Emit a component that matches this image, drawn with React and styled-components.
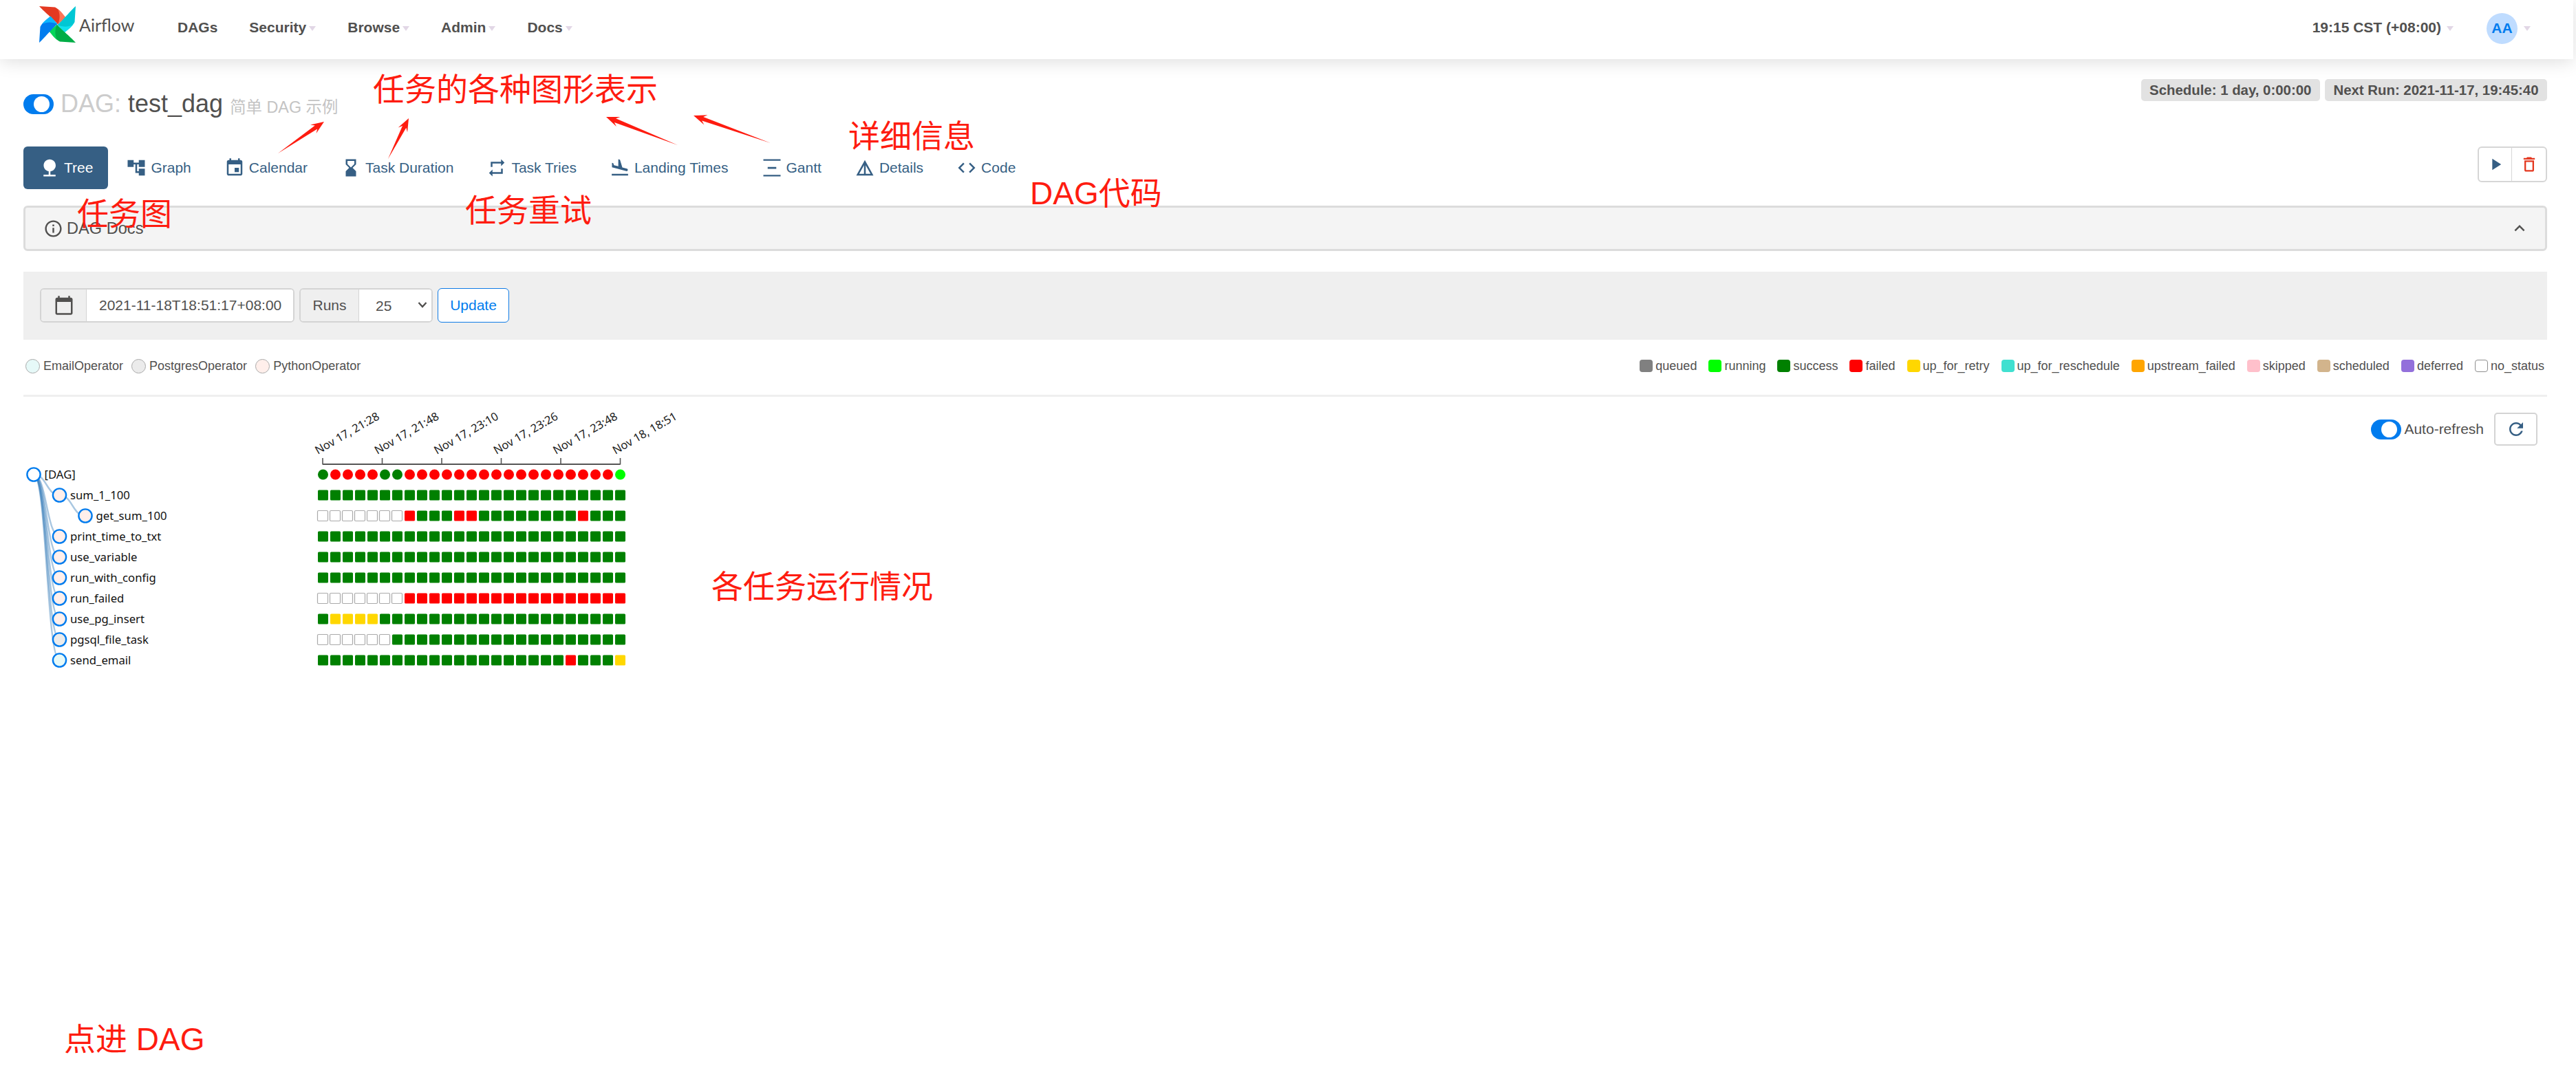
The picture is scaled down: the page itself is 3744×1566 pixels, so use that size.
import React from "react";
import styled, { createGlobalStyle } from "styled-components";

const Global = createGlobalStyle`
  html, body { margin: 0; padding: 0; background: #fff; }
  body { font-family: "Liberation Sans", Arial, sans-serif; color: #51504f; }
  * { box-sizing: border-box; }
`;

const Page = styled.div`
  position: relative;
  width: 3744px;
  height: 1566px;
  overflow: hidden;
  background: #fff;
`;

const Navbar = styled.header`
  width: 3740px;
  height: 86px;
  display: flex;
  align-items: center;
  padding: 0 62px 7px 57px;
  background: #fff;
  box-shadow: 0 4px 24px rgba(0, 0, 0, 0.13);
`;

const Brand = styled.div`
  display: flex;
  align-items: center;
  width: 201px;
  height: 53px;
  margin-top: -8px;
`;

const BrandName = styled.span`
  font-family: Lato, sans-serif;
  font-size: 25px;
  margin-left: 5px;
  margin-top: 1px;
  color: #51504f;
`;

const NavLinks = styled.nav`
  display: flex;
  align-items: center;
  gap: 46px;
  flex: 1;
`;

const NavItem = styled.span`
  display: inline-flex;
  align-items: center;
  font-size: 21px;
  font-weight: 700;
  color: #51504f;
  line-height: 24px;
`;

const Caret = styled.i`
  display: inline-block;
  width: 0;
  height: 0;
  margin-left: ${(p) => p.$gap || 4}px;
  margin-top: 4px;
  border-left: 5.5px solid transparent;
  border-right: 5.5px solid transparent;
  border-top: 7px solid #e2d7e6;
`;

const Avatar = styled.span`
  width: 45px;
  height: 45px;
  margin: 3px 0 0 48px;
  border-radius: 50%;
  background: #bfdcff;
  color: #017cee;
  font-size: 21px;
  font-weight: 700;
  display: flex;
  align-items: center;
  justify-content: center;
`;

const Main = styled.main`
  width: 3702px;
  margin-left: 34px;
  padding-right: 34px;
`;

const TitleRow = styled.div`
  display: flex;
  justify-content: space-between;
  align-items: flex-start;
  height: 98px;
  margin-top: 29px;
`;

const Title = styled.div`
  display: flex;
  align-items: center;
  margin-top: 11px;
  height: 50px;
`;

const Toggle = styled.span`
  position: relative;
  display: inline-block;
  flex: none;
  width: 44px;
  height: 29px;
  border-radius: 15px;
  background: #017cee;
  &::after {
    content: "";
    position: absolute;
    top: 3px;
    right: 6px;
    width: 23px;
    height: 23px;
    border-radius: 50%;
    background: #fff;
  }
`;

const DagLabel = styled.span`
  font-size: 36px;
  color: #ccc;
  margin-left: 10px;
`;

const DagName = styled.span`
  font-size: 36px;
  color: #51504f;
  margin-left: 10px;
`;

const DagDesc = styled.small`
  font-family: "Liberation Sans", "Noto Sans CJK SC", sans-serif;
  font-size: 23.4px;
  color: #c4c4c4;
  margin-left: 10px;
  margin-top: 5px;
`;

const Badges = styled.div`
  display: flex;
  gap: 7px;
`;

const Badge = styled.span`
  height: 32px;
  padding: 0 12.5px;
  display: flex;
  align-items: center;
  background: #e2e2e2;
  border-radius: 5px;
  font-size: 20.4px;
  font-weight: 700;
  color: #51504f;
`;

const TabsRow = styled.div`
  display: flex;
  justify-content: space-between;
  align-items: flex-start;
  height: 62px;
`;

const Tabs = styled.div`
  display: flex;
  gap: 3px;
`;

const Tab = styled.a`
  height: 62px;
  padding: 0 22px 0 23px;
  display: flex;
  align-items: center;
  gap: 6px;
  font-size: 21px;
  border-radius: 6px;
  color: ${(p) => (p.$active ? "#fff" : "#365f84")};
  background: ${(p) => (p.$active ? "#365f84" : "transparent")};
`;

const Icon = styled.svg`
  width: ${(p) => p.$size || 30}px;
  height: ${(p) => p.$size || 30}px;
  flex: none;
  fill: ${(p) => p.$color || "currentColor"};
`;

const ActionGroup = styled.div`
  display: flex;
  height: 52px;
  border: 2px solid #d6d6d6;
  border-radius: 6px;
`;

const ActionButton = styled.span`
  width: ${(p) => p.$w}px;
  display: flex;
  align-items: center;
  justify-content: center;
  border-left: ${(p) => (p.$divided ? "1.5px solid #d6d6d6" : "none")};
`;

const DocsPanel = styled.section`
  height: 66px;
  margin-top: 24px;
  padding: 0 22px 0 26px;
  display: flex;
  align-items: center;
  justify-content: space-between;
  background: #f4f4f4;
  border: 3px solid #dcdcdc;
  border-radius: 6px;
`;

const DocsTitle = styled.span`
  display: flex;
  align-items: center;
  gap: 5px;
  font-size: 23.6px;
  color: #51504f;
`;

const Toolbar = styled.div`
  margin-top: 30px;
  height: 99px;
  padding: 24px;
  display: flex;
  gap: 7px;
  background: #efefef;
`;

const InputGroup = styled.div`
  height: 50px;
  display: flex;
  background: #fff;
  border: 2px solid #d4d4d4;
  border-radius: 6px;
  overflow: hidden;
`;

const Addon = styled.span`
  width: ${(p) => p.$w}px;
  display: flex;
  align-items: center;
  justify-content: center;
  background: #efefef;
  border-right: 1.5px solid #d4d4d4;
  font-size: 21px;
  color: #51504f;
`;

const DateInput = styled.input`
  width: 300px;
  border: none;
  outline: none;
  padding: 0 0 0 18px;
  font-family: "Liberation Sans", Arial, sans-serif;
  font-size: 21px;
  color: #51504f;
  background: #fff;
`;

const SelectWrap = styled.span`
  position: relative;
  width: 105px;
  display: flex;
`;

const RunsSelect = styled.select`
  width: 100%;
  border: none;
  outline: none;
  appearance: none;
  padding: 0 0 0 24px;
  font-family: "Liberation Sans", Arial, sans-serif;
  font-size: 21px;
  color: #51504f;
  background: #fff;
`;

const SelectChevron = styled.svg`
  position: absolute;
  right: 6px;
  top: 17px;
  width: 14px;
  height: 10px;
  fill: none;
  stroke: #51504f;
  stroke-width: 2.4;
`;

const UpdateButton = styled.button`
  width: 104px;
  height: 50px;
  padding: 0;
  background: #fff;
  border: 1.5px solid #0f7be6;
  border-radius: 6px;
  font-family: "Liberation Sans", Arial, sans-serif;
  font-size: 21px;
  color: #017cee;
`;

const LegendRow = styled.div`
  height: 83px;
  padding: 0 4px 0 3px;
  display: flex;
  align-items: center;
  justify-content: space-between;
  border-bottom: 3px solid #efefef;
`;

const LegendList = styled.div`
  display: flex;
  align-items: center;
  gap: ${(p) => p.$gap}px;
  margin-top: -4px;
`;

const LegendItem = styled.span`
  display: inline-flex;
  align-items: center;
  gap: ${(p) => p.$gap}px;
  font-size: 18px;
  color: #51504f;
`;

const OperatorDot = styled.i`
  width: 21px;
  height: 21px;
  border-radius: 50%;
  background: ${(p) => p.$fill};
  border: 1.5px solid #a9a9a9;
`;

const StateBox = styled.i`
  width: 19px;
  height: 18px;
  border-radius: 4px;
  background: ${(p) => p.$fill};
  border: ${(p) => (p.$fill === "#fff" ? "1.5px solid #8f8f8f" : "none")};
`;

const TreeArea = styled.div`
  display: flex;
  justify-content: space-between;
  align-items: flex-start;
`;

const TreeSvg = styled.svg`
  display: block;
  width: 1040px;
  height: 410px;
  margin-left: -34px;
  overflow: visible;
  flex: none;
`;

const RefreshBar = styled.div`
  display: flex;
  align-items: center;
  margin-top: 23px;
  margin-right: 14px;
`;

const RefreshLabel = styled.span`
  font-size: 21px;
  color: #51504f;
  margin: 0 15px 0 4px;
`;

const RefreshButton = styled.span`
  width: 63px;
  height: 48px;
  display: flex;
  align-items: center;
  justify-content: center;
  border: 2px solid #d4d4d4;
  border-radius: 5px;
  color: #365f84;
`;

const NodeLabel = styled.text`
  font-family: "Noto Sans", sans-serif;
  font-size: 16.7px;
  fill: #111;
  dominant-baseline: central;
`;

const AxisLabel = styled.text`
  font-family: "Noto Sans", sans-serif;
  font-size: 16.5px;
  fill: #222;
`;

const Note = styled.span`
  position: absolute;
  left: ${(p) => p.$x}px;
  top: ${(p) => p.$y}px;
  font-family: "Liberation Sans", "Noto Sans CJK SC", sans-serif;
  font-size: 46px;
  line-height: 1;
  color: #fe1c10;
  white-space: nowrap;
`;

const ArrowLayer = styled.svg`
  position: absolute;
  left: 0;
  top: 0;
  width: 3744px;
  height: 400px;
  pointer-events: none;
  fill: #fe1c10;
`;

const paths = {
  nature: "M13 16.12c3.47-.41 6.17-3.36 6.17-6.95 0-3.87-3.13-7-7-7s-7 3.13-7 7c0 3.47 2.52 6.34 5.83 6.89V20H5v2h14v-2h-6v-3.88z",
  graph: "M22 11V3h-7v3H9V3H2v8h7V8h2v10h4v3h7v-8h-7v3h-2V8h2v3z",
  event: "M17 12h-5v5h5v-5zM16 1v2H8V1H6v2H5c-1.11 0-1.99.9-1.99 2L3 19c0 1.1.89 2 2 2h14c1.1 0 2-.9 2-2V5c0-1.1-.9-2-2-2h-1V1h-2zm3 18H5V8h14v11z",
  hourglass: "M18 22l-.01-6L14 12l3.99-4.01L18 2H6v6l4 4-4 3.99V22h12zM8 7.5V4h8v3.5l-4 4-4-4z",
  repeat: "M7 7h10v3l4-4-4-4v3H5v6h2V7zm10 10H7v-3l-4 4 4 4v-3h12v-6h-2v4z",
  land: "M2.5 19h19v2h-19zm7.18-5.73l4.35 1.16 5.31 1.42c.8.21 1.62-.26 1.84-1.06.21-.8-.26-1.62-1.06-1.84l-5.31-1.42-2.76-9.02L10.12 2v8.28L5.15 8.95l-.93-2.32-1.45-.39v5.17l1.6.43 5.31 1.43z",
  gantt: "M2 2h20v1.8H2zM7 11h10v2.2H7zM2 20.2h20V22H2z",
  details: "M12 3L2 21h20L12 3zm1 5.92L18.6 19H13V8.92zm-2 0V19H5.4L11 8.92z",
  code: "M9.4 16.6L4.8 12l4.6-4.6L8 6l-6 6 6 6 1.4-1.4zm5.2 0l4.6-4.6-4.6-4.6L16 6l6 6-6 6-1.4-1.4z",
  play: "M8 5v14l11-7z",
  trash: "M6 19c0 1.1.9 2 2 2h8c1.1 0 2-.9 2-2V7H6v12zM8 9h8v10H8V9zm7.5-5l-1-1h-5l-1 1H5v2h14V4z",
  calendar: "M20 3h-1V1h-2v2H7V1H5v2H4c-1.1 0-2 .9-2 2v16c0 1.1.9 2 2 2h16c1.1 0 2-.9 2-2V5c0-1.1-.9-2-2-2zm0 18H4V8h16v13z",
  refresh: "M17.65 6.35C16.2 4.9 14.21 4 12 4c-4.42 0-7.99 3.58-7.99 8s3.57 8 7.99 8c3.73 0 6.84-2.55 7.73-6h-2.08c-.82 2.33-3.04 4-5.65 4-3.31 0-6-2.69-6-6s2.69-6 6-6c1.66 0 3.14.69 4.22 1.78L13 11h7V4l-2.35 2.35z",
  info: "M11 7h2v2h-2zm0 4h2v6h-2zm1-9C6.48 2 2 6.48 2 12s4.48 10 10 10 10-4.48 10-10S17.52 2 12 2zm0 18c-4.41 0-8-3.59-8-8s3.59-8 8-8 8 3.59 8 8-3.59 8-8 8z",
  less: "M12 8l-6 6 1.41 1.41L12 10.83l4.59 4.58L18 14z",
};

const Glyph = ({ name, size, color }) => (
  <Icon viewBox="0 0 24 24" $size={size} $color={color}>
    <path d={paths[name]} />
  </Icon>
);

const blades = [
  { rotate: 0, main: "#e43921", light: "#ff7557" },
  { rotate: 90, main: "#00c7d4", light: "#11e1ee" },
  { rotate: 180, main: "#00ad46", light: "#04d659" },
  { rotate: 270, main: "#017cee", light: "#0cb6ff" },
];

const Logo = () => (
  <svg width="53" height="53" viewBox="0 0 53 53">
    {blades.map((b) => (
      <g key={b.rotate} transform={`rotate(${b.rotate} 26.5 26.5)`}>
        <path d="M0 0 L23 1.5 C30 5 34 12 38 16.5 L27 26.5 C24.5 22 8 9 0 0Z" fill={b.main} />
        <path d="M27 4 C32 7.5 35.5 13 38.5 16.5 L27 26.5 C30.5 19 30.5 11 27 4Z" fill={b.light} />
      </g>
    ))}
  </svg>
);

const tabs = [
  { label: "Tree", icon: "nature", active: true },
  { label: "Graph", icon: "graph" },
  { label: "Calendar", icon: "event" },
  { label: "Task Duration", icon: "hourglass" },
  { label: "Task Tries", icon: "repeat" },
  { label: "Landing Times", icon: "land" },
  { label: "Gantt", icon: "gantt" },
  { label: "Details", icon: "details" },
  { label: "Code", icon: "code" },
];

const operators = [
  { name: "EmailOperator", fill: "#e6f9f8" },
  { name: "PostgresOperator", fill: "#ebebeb" },
  { name: "PythonOperator", fill: "#ffefeb" },
];

const states = [
  ["queued", "#808080"],
  ["running", "#00ff00"],
  ["success", "#008000"],
  ["failed", "#ff0000"],
  ["up_for_retry", "#ffd700"],
  ["up_for_reschedule", "#40e0d0"],
  ["upstream_failed", "#ffa500"],
  ["skipped", "#ffc0cb"],
  ["scheduled", "#d2b48c"],
  ["deferred", "#9370db"],
  ["no_status", "#fff"],
];

const rep = (c, n) => Array(n).fill(c);
const G = "#008000", R = "#ff0000", Y = "#ffd700", N = null, L = "#00ff00";

const nodes = [
  { name: "[DAG]", depth: 0, fill: "#fff", runs: [G, ...rep(R, 4), G, G, ...rep(R, 17), L] },
  { name: "sum_1_100", depth: 1, fill: "#ffefeb", runs: rep(G, 25) },
  { name: "get_sum_100", depth: 2, fill: "#ffefeb", parent: 1, runs: [...rep(N, 7), R, G, G, G, R, R, ...rep(G, 8), R, G, G, G] },
  { name: "print_time_to_txt", depth: 1, fill: "#ffefeb", runs: rep(G, 25) },
  { name: "use_variable", depth: 1, fill: "#ffefeb", runs: rep(G, 25) },
  { name: "run_with_config", depth: 1, fill: "#ffefeb", runs: rep(G, 25) },
  { name: "run_failed", depth: 1, fill: "#ffefeb", runs: [...rep(N, 7), ...rep(R, 18)] },
  { name: "use_pg_insert", depth: 1, fill: "#ffefeb", runs: [G, ...rep(Y, 4), ...rep(G, 20)] },
  { name: "pgsql_file_task", depth: 1, fill: "#ebebeb", runs: [...rep(N, 6), ...rep(G, 19)] },
  { name: "send_email", depth: 1, fill: "#e6f9f8", runs: [...rep(G, 20), R, G, G, G, Y] },
];

const axisTicks = [
  { x: 469, label: "Nov 17, 21:28" },
  { x: 555.5, label: "Nov 17, 21:48" },
  { x: 642, label: "Nov 17, 23:10" },
  { x: 728.5, label: "Nov 17, 23:26" },
  { x: 815, label: "Nov 17, 23:48" },
  { x: 901.5, label: "Nov 18, 18:51" },
];

const Y0 = 577; // tree area top on the page
const nodeX = (d) => 49 + d * 37.5;
const nodeY = (i) => 690 - Y0 + i * 30;

const TreeChart = () => (
  <TreeSvg viewBox="0 0 1040 410">
    {nodes.map((n, i) => {
      if (i === 0) return null;
      const srcIdx = n.parent || 0;
      const x0 = nodeX(nodes[srcIdx].depth), y0 = nodeY(srcIdx);
      const x1 = nodeX(n.depth), y1 = nodeY(i);
      const m = (x0 + x1) / 2;
      return (
        <path
          key={n.name}
          d={`M${x0} ${y0} C${m} ${y0} ${m} ${y1} ${x1} ${y1}`}
          fill="none"
          stroke="#337ab7"
          strokeWidth="2.4"
          strokeOpacity="0.42"
        />
      );
    })}
    {nodes.map((n, i) => (
      <g key={n.name}>
        <circle cx={nodeX(n.depth)} cy={nodeY(i)} r="9.6" fill={n.fill} stroke="#017cee" strokeWidth="2.4" />
        <NodeLabel x={nodeX(n.depth) + 15.5} y={nodeY(i) - 1}>{n.name}</NodeLabel>
      </g>
    ))}
    <path d="M469 98 H901.5" fill="none" stroke="#555" strokeWidth="2" />
    {axisTicks.map((t) => (
      <g key={t.label}>
        <path d={`M${t.x} 98.5 V89`} stroke="#555" strokeWidth="1.6" />
        <AxisLabel transform={`translate(${t.x - 7} 84) rotate(-30)`}>{t.label}</AxisLabel>
      </g>
    ))}
    {nodes.map((n, i) =>
      n.runs.map((c, j) => {
        const x = 462 + j * 18;
        const cy = nodeY(i);
        if (i === 0) return <circle key={j} cx={x + 7.5} cy={cy} r="7.5" fill={c} />;
        if (!c)
          return <rect key={`${i}-${j}`} x={x - 0.5} y={cy - 7.5} width="15" height="15" rx="1.5" fill="#fff" stroke="#aaa" strokeWidth="1.2" />;
        return <rect key={`${i}-${j}`} x={x} y={cy - 7.5} width="15" height="15" rx="1.5" fill={c} />;
      })
    )}
  </TreeSvg>
);

const arrowPoints = ([x0, y0], [x1, y1]) => {
  const dx = x1 - x0, dy = y1 - y0;
  const len = Math.hypot(dx, dy);
  const ux = dx / len, uy = dy / len, px = -uy, py = ux;
  const at = (back, off) => `${x1 - ux * back + px * off},${y1 - uy * back + py * off}`;
  return [`${x0},${y0}`, at(14, 3), at(19, 7.5), `${x1},${y1}`, at(19, -7.5), at(14, -3)].join(" ");
};

const arrows = [
  [[404, 223], [471, 177]],
  [[564, 231], [594, 172]],
  [[985, 211], [881, 170]],
  [[1120, 208], [1008, 168]],
];

const notes = [
  { text: "任务的各种图形表示", x: 542, y: 107 },
  { text: "任务图", x: 112, y: 288 },
  { text: "任务重试", x: 676, y: 283 },
  { text: "详细信息", x: 1233, y: 175 },
  { text: "DAG代码", x: 1497, y: 258 },
  { text: "各任务运行情况", x: 1034, y: 830 },
  { text: "点进 DAG", x: 93, y: 1488 },
];

export default function App() {
  return (
    <Page>
      <Global />
      <Navbar>
        <Brand>
          <Logo />
          <BrandName>Airflow</BrandName>
        </Brand>
        <NavLinks>
          <NavItem>DAGs</NavItem>
          {["Security", "Browse", "Admin", "Docs"].map((t) => (
            <NavItem key={t}>
              {t}
              <Caret />
            </NavItem>
          ))}
        </NavLinks>
        <NavItem>
          19:15 CST (+08:00)
          <Caret $gap={8} />
        </NavItem>
        <Avatar>AA</Avatar>
        <Caret $gap={9} />
      </Navbar>

      <Main>
        <TitleRow>
          <Title>
            <Toggle />
            <DagLabel>DAG:</DagLabel>
            <DagName>test_dag</DagName>
            <DagDesc>简单 DAG 示例</DagDesc>
          </Title>
          <Badges>
            <Badge>Schedule: 1 day, 0:00:00</Badge>
            <Badge>Next Run: 2021-11-17, 19:45:40</Badge>
          </Badges>
        </TitleRow>

        <TabsRow>
          <Tabs>
            {tabs.map((t) => (
              <Tab key={t.label} $active={t.active}>
                <Glyph name={t.icon} />
                {t.label}
              </Tab>
            ))}
          </Tabs>
          <ActionGroup>
            <ActionButton $w={47}>
              <Glyph name="play" color="#365f84" size={28} />
            </ActionButton>
            <ActionButton $w={50} $divided>
              <Glyph name="trash" color="#e43921" size={28} />
            </ActionButton>
          </ActionGroup>
        </TabsRow>

        <DocsPanel>
          <DocsTitle>
            <Glyph name="info" size={29} color="#51504f" />
            DAG Docs
          </DocsTitle>
          <Glyph name="less" size={30} color="#51504f" />
        </DocsPanel>

        <Toolbar>
          <InputGroup>
            <Addon $w={66}>
              <Glyph name="calendar" size={30} color="#51504f" />
            </Addon>
            <DateInput defaultValue="2021-11-18T18:51:17+08:00" readOnly />
          </InputGroup>
          <InputGroup>
            <Addon $w={85}>Runs</Addon>
            <SelectWrap>
              <RunsSelect defaultValue="25">
                <option value="25">25</option>
              </RunsSelect>
              <SelectChevron viewBox="0 0 14 10">
                <path d="M1.5 2 L7 8 L12.5 2" />
              </SelectChevron>
            </SelectWrap>
          </InputGroup>
          <UpdateButton>Update</UpdateButton>
        </Toolbar>

        <LegendRow>
          <LegendList $gap={12}>
            {operators.map((o) => (
              <LegendItem key={o.name} $gap={5}>
                <OperatorDot $fill={o.fill} />
                {o.name}
              </LegendItem>
            ))}
          </LegendList>
          <LegendList $gap={17}>
            {states.map(([name, fill]) => (
              <LegendItem key={name} $gap={4}>
                <StateBox $fill={fill} />
                {name}
              </LegendItem>
            ))}
          </LegendList>
        </LegendRow>

        <TreeArea>
          <TreeChart />
          <RefreshBar>
            <Toggle />
            <RefreshLabel>Auto-refresh</RefreshLabel>
            <RefreshButton>
              <Glyph name="refresh" size={30} />
            </RefreshButton>
          </RefreshBar>
        </TreeArea>
      </Main>

      <ArrowLayer viewBox="0 0 3744 400">
        {arrows.map(([a, b]) => (
          <polygon key={a.join()} points={arrowPoints(a, b)} />
        ))}
      </ArrowLayer>
      {notes.map((n) => (
        <Note key={n.text} $x={n.x} $y={n.y}>
          {n.text}
        </Note>
      ))}
    </Page>
  );
}
